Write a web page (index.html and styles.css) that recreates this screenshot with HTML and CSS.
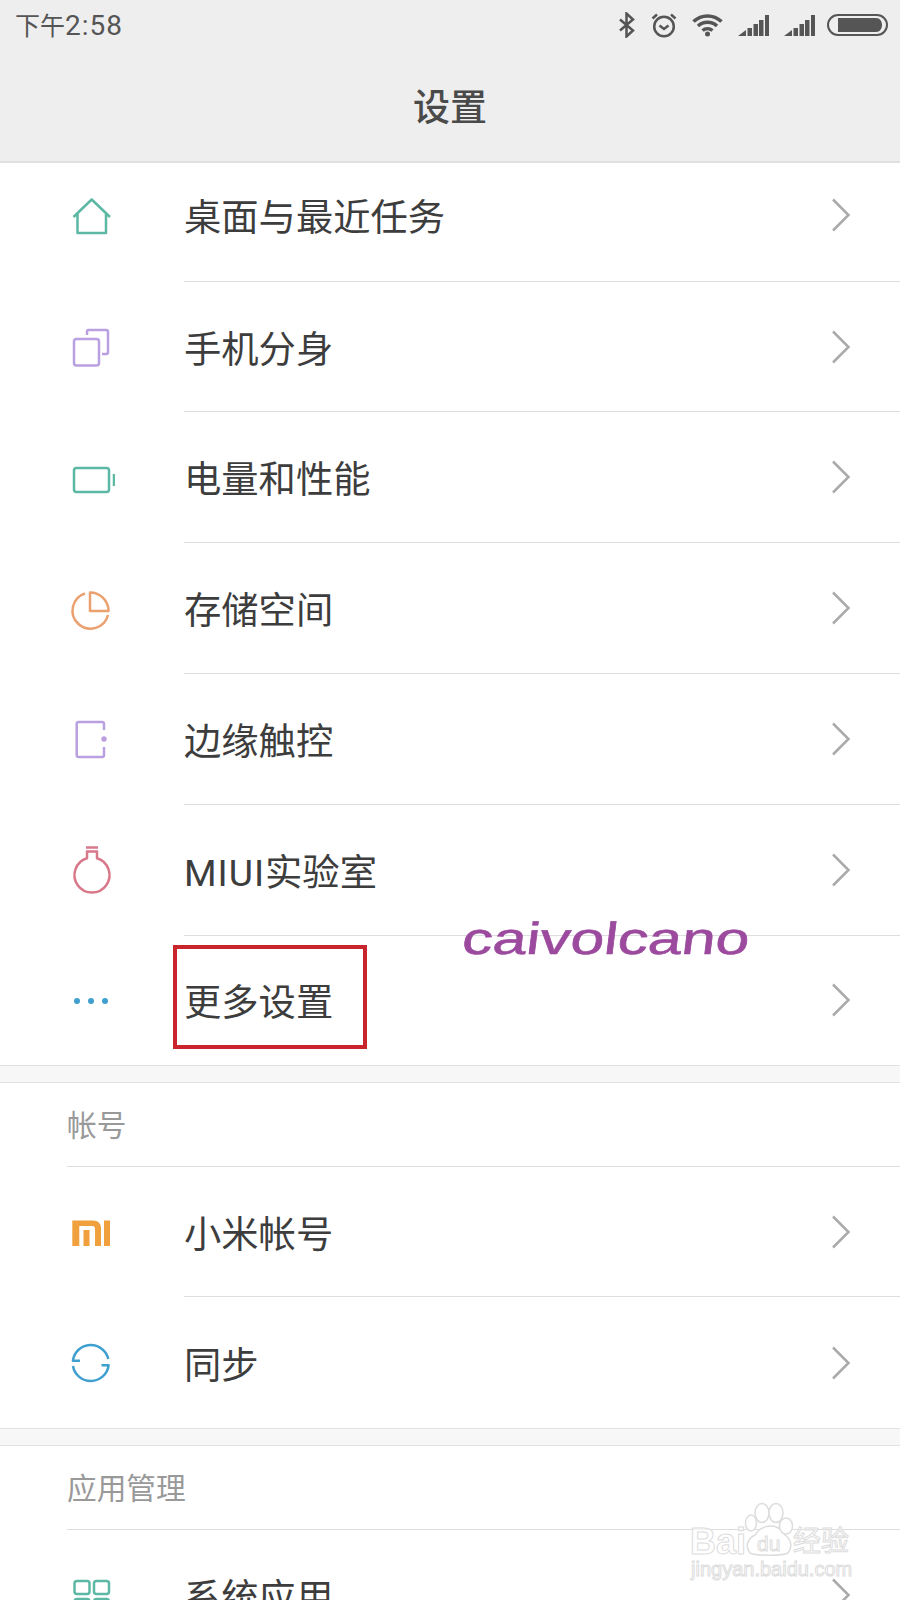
FILE: index.html
```html
<!DOCTYPE html>
<html lang="zh-CN">
<head>
    <meta charset="UTF-8">
    <meta name="viewport" content="width=device-width, initial-scale=1.0">
    <title>设置</title>
    <link rel="stylesheet" href="styles.css">
</head>
<body>
    <div class="page">
        <header class="top-bar">
            <div class="status-bar">
                <span class="status-time">下午<span class="status-digits">2:58</span></span>
                <div class="status-icons">
                    <svg width="18" height="26" viewBox="0 0 18 26"><path class="st" d="M2 7.5 15 18.5 8.5 24.5V1.5L15 7.5 2 18.5"/></svg>
                    <svg width="26" height="26" viewBox="0 0 26 26"><circle class="st" cx="13" cy="14.5" r="9.8"/><path class="st" d="M8.5 13.5 13 17 17.5 13.5M1.5 6.5 6 2.5M24.5 6.5 20 2.5"/></svg>
                    <svg width="31" height="24" viewBox="0 0 31 24"><path class="st-wide" d="M1.5 8.5C9.5 1 21.5 1 29.5 8.5M6 13C11.500 8 19.500 8 25 13M10.500 17.500C13.500 15 17.500 15 20.500 17.500"/><circle class="fl" cx="15.500" cy="21" r="2.500"/></svg>
                    <svg width="31" height="21" viewBox="0 0 31 21"><path class="fl" d="M0 21 8 15V21ZM9.500 13H14V21H9.500ZM15.500 9H20V21H15.500ZM21 5H25.500V21H21ZM27 0H31V21H27Z"/></svg>
                    <svg width="31" height="21" viewBox="0 0 31 21"><path class="fl" d="M0 21 8 15V21ZM9.500 13H14V21H9.500ZM15.500 9H20V21H15.500ZM21 5H25.500V21H21ZM27 0H31V21H27Z"/></svg>
                    <svg class="status-battery" width="61" height="22" viewBox="0 0 61 22"><rect class="st-thin" x="1" y="1" width="59" height="20" rx="10"/><path class="fl" d="M11 4H49C57 4 57 18 49 18H11Z"/></svg>
                </div>
            </div>
            <h1 class="top-title">设置</h1>
        </header>

        <section class="group">
            <div class="row row-first">
                <div class="row-icon"><svg width="48" height="48" viewBox="0 0 48 48"><path class="ic teal" d="M6.500 25 24.700 7.500 43 25M10.500 21.500V41H39V21.500"/></svg></div>
                <div class="row-body"><span>桌面与最近任务</span><svg class="chevron" width="20" height="34" viewBox="0 0 20 34"><path d="M2 1.500 17.500 17 2 32.500"/></svg></div>
            </div>
            <div class="row">
                <div class="row-icon"><svg width="48" height="48" viewBox="0 0 48 48"><rect class="ic purple" x="7" y="16" width="25" height="26.500" rx="2.500"/><path class="ic purple" d="M20 12V8.500C20 7.500 20.700 7 21.500 7H39C40 7 41 7.700 41 9V29C41 30 40.500 31 39 31H35"/></svg></div>
                <div class="row-body"><span>手机分身</span><svg class="chevron" width="20" height="34" viewBox="0 0 20 34"><path d="M2 1.500 17.500 17 2 32.500"/></svg></div>
            </div>
            <div class="row">
                <div class="row-icon"><svg width="48" height="48" viewBox="0 0 48 48"><rect class="ic teal" x="7" y="14" width="35" height="24" rx="2.500"/><path class="ic teal" d="M47 20V32"/></svg></div>
                <div class="row-body"><span>电量和性能</span><svg class="chevron" width="20" height="34" viewBox="0 0 20 34"><path d="M2 1.500 17.500 17 2 32.500"/></svg></div>
            </div>
            <div class="row">
                <div class="row-icon"><svg width="48" height="48" viewBox="0 0 48 48"><path class="ic orange" d="M18 8.500A18 18 0 1 0 41 30"/><path class="ic orange" d="M23 7.500A18.500 18.500 0 0 1 41.500 26H23Z"/></svg></div>
                <div class="row-body"><span>存储空间</span><svg class="chevron" width="20" height="34" viewBox="0 0 20 34"><path d="M2 1.500 17.500 17 2 32.500"/></svg></div>
            </div>
            <div class="row">
                <div class="row-icon"><svg width="48" height="48" viewBox="0 0 48 48"><path class="ic purple" d="M37 15V9A2 2 0 0 0 35 7H11.700A2 2 0 0 0 9.700 9V40A2 2 0 0 0 11.700 42H35A2 2 0 0 0 37 40V32"/><circle class="dot-purple" cx="37" cy="24" r="2.700"/></svg></div>
                <div class="row-body"><span>边缘触控</span><svg class="chevron" width="20" height="34" viewBox="0 0 20 34"><path d="M2 1.500 17.500 17 2 32.500"/></svg></div>
            </div>
            <div class="row">
                <div class="row-icon"><svg width="48" height="48" viewBox="0 0 48 48"><path class="ic rose" d="M20 5.500H30V12.300A17.500 17.500 0 1 1 20 12.300ZM19 1.500H31"/></svg></div>
                <div class="row-body"><span><span class="latin">MIUI</span>实验室</span><svg class="chevron" width="20" height="34" viewBox="0 0 20 34"><path d="M2 1.500 17.500 17 2 32.500"/></svg></div>
            </div>
            <div class="row row-short">
                <div class="row-icon"><svg width="48" height="48" viewBox="0 0 48 48"><circle class="dot-blue" cx="10" cy="25" r="3"/><circle class="dot-blue" cx="24" cy="25" r="3"/><circle class="dot-blue" cx="38" cy="25" r="3"/></svg></div>
                <div class="row-body row-body-last"><span>更多设置</span><svg class="chevron" width="20" height="34" viewBox="0 0 20 34"><path d="M2 1.500 17.500 17 2 32.500"/></svg></div>
            </div>
        </section>

        <div class="group-gap"></div>

        <section class="group">
            <div class="group-label">帐号</div>
            <div class="row">
                <div class="row-icon"><svg width="48" height="48" viewBox="0 0 48 48"><path class="mi" d="M5.300 12.500H26C31 12.500 34 15.500 34 20V38H28V21C28 19 27 18 25 18H12.300V38H5.300ZM16.500 22H22.500V38H16.500ZM37 12.500H43V38H37Z"/></svg></div>
                <div class="row-body"><span>小米帐号</span><svg class="chevron" width="20" height="34" viewBox="0 0 20 34"><path d="M2 1.500 17.500 17 2 32.500"/></svg></div>
            </div>
            <div class="row row-end">
                <div class="row-icon"><svg width="48" height="48" viewBox="0 0 48 48"><path class="ic blue" d="M13 21.700H5.900A18 18 0 0 1 41.300 20M34.500 26.300H41.600A18 18 0 0 1 6 27"/></svg></div>
                <div class="row-body row-body-last"><span>同步</span><svg class="chevron" width="20" height="34" viewBox="0 0 20 34"><path d="M2 1.500 17.500 17 2 32.500"/></svg></div>
            </div>
        </section>

        <div class="group-gap"></div>

        <section class="group">
            <div class="group-label">应用管理</div>
            <div class="row">
                <div class="row-icon"><svg width="48" height="48" viewBox="0 0 48 48"><rect class="ic teal" x="7.500" y="10" width="15" height="13" rx="2.500"/><rect class="ic teal" x="27" y="10" width="15" height="13" rx="2.500"/><rect class="ic teal" x="7.500" y="28" width="15" height="13" rx="2.500"/><rect class="ic teal" x="27" y="28" width="15" height="13" rx="2.500"/></svg></div>
                <div class="row-body"><span>系统应用</span><svg class="chevron" width="20" height="34" viewBox="0 0 20 34"><path d="M2 1.500 17.500 17 2 32.500"/></svg></div>
            </div>
        </section>

        <!-- marcas puestas encima de la captura -->
        <div class="red-box"></div>
        <div class="sign">caivolcano</div>
        <div class="baidu">
            <svg class="baidu-paw" width="48" height="52" viewBox="0 0 48 52"><path class="paw" d="M5 50C0 44 2 36 10 32C14 26 20 23 26 23C32 23 37 27 40 32C46 36 48 44 43 50C38 53 10 53 5 50Z"/><ellipse class="paw" cx="6" cy="20" rx="5.500" ry="8"/><ellipse class="paw" cx="17" cy="10" rx="7" ry="9.500"/><ellipse class="paw" cx="31" cy="10" rx="7" ry="9.500"/><ellipse class="paw" cx="41" cy="23" rx="6.500" ry="8"/></svg>
            <span class="baidu-bai">Bai</span>
            <span class="baidu-du">du</span>
            <span class="baidu-jy">经验</span>
            <span class="baidu-url">jingyan.baidu.com</span>
        </div>
    </div>
</body>
</html>
```

FILE: styles.css
```css
* {
    margin: 0;
    padding: 0;
    box-sizing: border-box;
}

body {
    background-color: white;
    font-family: Roboto, 'Noto Sans CJK SC', sans-serif;
}

.page {
    position: relative;
    width: 900px;
    height: 1600px;
    overflow: hidden;
    background-color: white;
}

.top-bar {
    height: 163px;
    background-color: #eeeeee;
    border-bottom: 2px solid #e0e0e0;
}

.status-bar {
    height: 50px;
    padding: 0 12px 0 15px;
    display: flex;
    justify-content: space-between;
    align-items: center;
}

.status-time {
    font-size: 25px;
    color: #555;
    position: relative;
    top: -1px;
}

.status-digits {
    font-size: 28px;
    letter-spacing: 1px;
}

.status-icons {
    display: flex;
    align-items: center;
    gap: 15px;
}

.status-battery {
    margin-left: -3px;
}

.st,
.st-wide,
.st-thin {
    fill: none;
    stroke: #555;
    stroke-width: 2.5;
}

.st-wide {
    stroke-width: 3.5;
}

.st-thin {
    stroke-width: 2;
}

.fl {
    fill: #555;
}

.top-title {
    height: 111px;
    line-height: 117px;
    text-align: center;
    font-size: 37px;
    font-weight: 500;
    color: #4a4a4a;
}

.row {
    height: 130.8px;
    display: flex;
}

.row-first {
    height: 118.7px;
}

.row-short {
    height: 129px;
}

.row-end {
    height: 130.4px;
}

.row-first .row-icon,
.row-first .row-body {
    padding-bottom: 13px;
}

.row-icon {
    width: 184px;
    flex-shrink: 0;
    padding-left: 67px;
    display: flex;
    align-items: center;
}

.row-body {
    flex: 1;
    padding-right: 49px;
    display: flex;
    justify-content: space-between;
    align-items: center;
    border-bottom: 1.5px solid #dedede;
    font-size: 37.3px;
    color: #3d3d3d;
}

.row-body-last {
    border-bottom: none;
}

.latin {
    letter-spacing: 1px;
}

.ic {
    fill: none;
    stroke-width: 2.5;
    stroke-linejoin: round;
}

.teal {
    stroke: #5cb8a4;
}

.purple {
    stroke: #b9a0e0;
}

.orange {
    stroke: #eaa06f;
}

.rose {
    stroke: #d9788a;
}

.blue {
    stroke: #3fa0cf;
}

.dot-purple {
    fill: #b9a0e0;
}

.dot-blue {
    fill: #3fa0cf;
}

.mi {
    fill: #f0a03c;
}

.chevron path {
    fill: none;
    stroke: #aaaaaa;
    stroke-width: 2.5;
}

.group-gap {
    height: 18px;
    background-color: #f7f7f7;
    border-top: 1.5px solid #e2e2e2;
    border-bottom: 1.5px solid #e2e2e2;
}

.group-label {
    height: 84px;
    margin-left: 67px;
    padding-bottom: 2px;
    display: flex;
    align-items: center;
    border-bottom: 1.5px solid #dedede;
    font-size: 29.7px;
    color: #999999;
}

.red-box {
    position: absolute;
    left: 173px;
    top: 945px;
    width: 194px;
    height: 104px;
    border: 4px solid #c9252d;
}

.sign {
    position: absolute;
    left: 466px;
    top: 912px;
    font-family: 'Liberation Sans', sans-serif;
    font-size: 45px;
    line-height: 54px;
    color: #9b4a9e;
    -webkit-text-stroke: 0.6px #9b4a9e;
    transform: skewX(-7deg) scaleX(1.35);
    transform-origin: left top;
}

.baidu {
    position: absolute;
    left: 690px;
    top: 1503px;
    width: 165px;
    height: 78px;
    font-family: 'Liberation Sans', 'Noto Sans CJK SC', sans-serif;
    color: rgba(255, 255, 255, 0.7);
    -webkit-text-stroke: 1px #dddddd;
}

.baidu-paw {
    position: absolute;
    left: 55px;
    top: 0;
    overflow: visible;
}

.paw {
    fill: white;
    stroke: #dddddd;
    stroke-width: 1.5;
}

.baidu-bai,
.baidu-du,
.baidu-jy,
.baidu-url {
    position: absolute;
    white-space: nowrap;
}

.baidu-bai {
    left: 0;
    top: 21px;
    font-size: 36px;
    line-height: 36px;
    font-weight: bold;
}

.baidu-du {
    left: 67px;
    top: 29px;
    font-size: 21px;
    line-height: 24px;
}

.baidu-jy {
    left: 103px;
    top: 23px;
    font-size: 28px;
    line-height: 32px;
}

.baidu-url {
    left: 1px;
    top: 54px;
    font-size: 20px;
    line-height: 24px;
}
```
